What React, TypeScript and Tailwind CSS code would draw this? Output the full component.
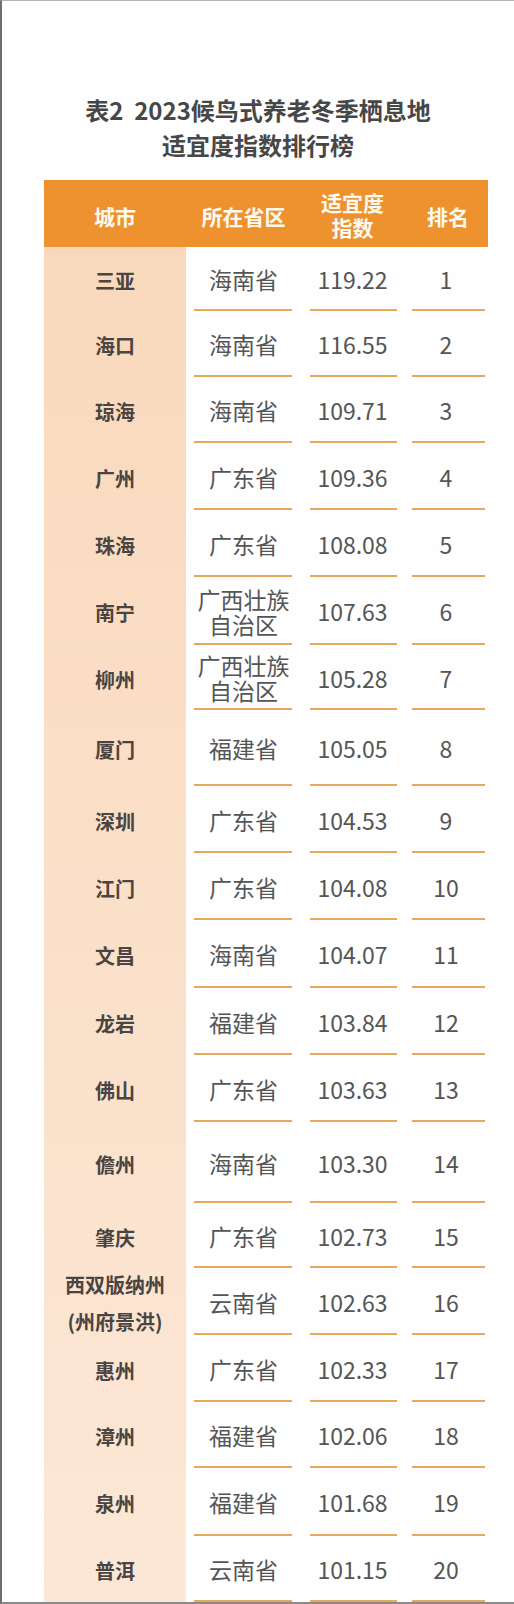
import React from 'react';

interface Row {
  city: string[];
  province: string[];
  index: string;
  rank: number;
  h: string;
}

const ROWS: Row[] = [
  { city: ['三亚'], province: ['海南省'], index: '119.22', rank: 1, h: 'h-[64px]' },
  { city: ['海口'], province: ['海南省'], index: '116.55', rank: 2, h: 'h-[66px]' },
  { city: ['琼海'], province: ['海南省'], index: '109.71', rank: 3, h: 'h-[66px]' },
  { city: ['广州'], province: ['广东省'], index: '109.36', rank: 4, h: 'h-[67px]' },
  { city: ['珠海'], province: ['广东省'], index: '108.08', rank: 5, h: 'h-[67px]' },
  { city: ['南宁'], province: ['广西壮族', '自治区'], index: '107.63', rank: 6, h: 'h-[68px]' },
  { city: ['柳州'], province: ['广西壮族', '自治区'], index: '105.28', rank: 7, h: 'h-[65px]' },
  { city: ['厦门'], province: ['福建省'], index: '105.05', rank: 8, h: 'h-[76px]' },
  { city: ['深圳'], province: ['广东省'], index: '104.53', rank: 9, h: 'h-[67px]' },
  { city: ['江门'], province: ['广东省'], index: '104.08', rank: 10, h: 'h-[67px]' },
  { city: ['文昌'], province: ['海南省'], index: '104.07', rank: 11, h: 'h-[68px]' },
  { city: ['龙岩'], province: ['福建省'], index: '103.84', rank: 12, h: 'h-[67px]' },
  { city: ['佛山'], province: ['广东省'], index: '103.63', rank: 13, h: 'h-[67px]' },
  { city: ['儋州'], province: ['海南省'], index: '103.30', rank: 14, h: 'h-[81px]' },
  { city: ['肇庆'], province: ['广东省'], index: '102.73', rank: 15, h: 'h-[65px]' },
  { city: ['西双版纳州', '(州府景洪)'], province: ['云南省'], index: '102.63', rank: 16, h: 'h-[67px]' },
  { city: ['惠州'], province: ['广东省'], index: '102.33', rank: 17, h: 'h-[67px]' },
  { city: ['漳州'], province: ['福建省'], index: '102.06', rank: 18, h: 'h-[66px]' },
  { city: ['泉州'], province: ['福建省'], index: '101.68', rank: 19, h: 'h-[68px]' },
  { city: ['普洱'], province: ['云南省'], index: '101.15', rank: 20, h: 'h-[66px]' },
];

const FONT = "font-['Noto_Sans_CJK_SC','Noto_Sans',sans-serif]";

// multi-line text kept in one element, lines split by <br />
function Lines({ lines }: { lines: string[] }) {
  return (
    <>
      {lines.map((l, i) => (
        <React.Fragment key={l}>
          {i > 0 && <br />}
          {l}
        </React.Fragment>
      ))}
    </>
  );
}

function Cell({ lines, inset }: { lines: string[]; inset: string }) {
  return (
    <div className="flex h-full flex-col">
      <div className="flex flex-1 items-center justify-center pt-[3px]">
        <div className="text-center leading-[25px]">
          <Lines lines={lines} />
        </div>
      </div>
      <div className={`h-[2px] bg-[#e8a75e] ${inset}`}></div>
    </div>
  );
}

export default function App() {
  return (
    <div
      className={`h-[1604px] w-[514px] overflow-hidden border-t border-b-2 border-l-2 border-t-[#b4b4b4] border-b-[#8a8a8a] border-l-[#6e6e6e] bg-[#fefefe] ${FONT}`}
    >
      {/* Title */}
      <div className="pt-[91px] text-center text-[24px] font-bold leading-[35px] text-[#474747]">
        表2&nbsp;&nbsp;2023候鸟式养老冬季栖息地
        <br />
        适宜度指数排行榜
      </div>

      {/* Table */}
      <div className="ml-[42px] mt-[18px] w-[444px]">
        {/* Header */}
        <div className="grid h-[67px] grid-cols-[142px_115px_103px_84px] bg-[#ee9230] text-[21px] font-bold text-[#fffaf0]">
          <div className="flex items-center justify-center pt-[6px]">城市</div>
          <div className="flex items-center justify-center pt-[6px]">所在省区</div>
          <div className="flex items-center justify-center pt-[2px]">
            <div className="text-center leading-[25px]">
              适宜度
              <br />
              指数
            </div>
          </div>
          <div className="flex items-center justify-center pt-[6px] pl-[4px]">排名</div>
        </div>

        {/* Body */}
        <div className="flex">
          <div className="w-[142px] bg-gradient-to-b from-[#f9d9bc] to-[#fce7d6]">
            {ROWS.map((r) => (
              <div
                key={r.rank}
                className={`${r.h} flex items-center justify-center pt-[3px] text-[20px] font-bold text-[#4a4542]`}
              >
                <div className={`text-center ${r.city.length > 1 ? 'leading-[37px]' : 'leading-[25px]'}`}>
                  <Lines lines={r.city} />
                </div>
              </div>
            ))}
          </div>
          <div className="flex-1 text-[23px] text-[#555555]">
            {ROWS.map((r) => (
              <div key={r.rank} className={`${r.h} grid grid-cols-[115px_103px_84px]`}>
                <Cell lines={r.province} inset="ml-[8px] mr-[9px]" />
                <Cell lines={[r.index]} inset="ml-[9px] mr-[7px]" />
                <Cell lines={[String(r.rank)]} inset="ml-[8px] mr-[3px]" />
              </div>
            ))}
          </div>
        </div>
      </div>
    </div>
  );
}
